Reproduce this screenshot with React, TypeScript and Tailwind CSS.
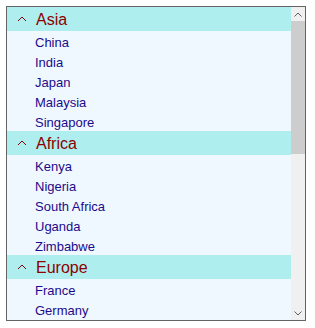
import React from "react";

const groups: { name: string; items: string[] }[] = [
  { name: "Asia", items: ["China", "India", "Japan", "Malaysia", "Singapore"] },
  { name: "Africa", items: ["Kenya", "Nigeria", "South Africa", "Uganda", "Zimbabwe"] },
  { name: "Europe", items: ["France", "Germany"] },
];

function Chevron() {
  return (
    <svg width="10" height="6" viewBox="0 0 10 6" className="shrink-0">
      <polyline points="1,5 5,1 9,5" fill="none" stroke="#8b0000" strokeWidth="1" />
    </svg>
  );
}

export default function App() {
  return (
    <div className="p-[6px]" style={{ fontFamily: '"Liberation Sans", Arial, sans-serif' }}>
      <div className="w-[300px] h-[315px] border border-[#646464] flex overflow-hidden">
        <div className="flex-1 overflow-hidden bg-[#f0f8ff]">
          {groups.map((g) => (
            <div key={g.name}>
              <div className="h-[24px] bg-[#afeeee] flex items-center pl-[10px] gap-[9px]">
                <Chevron />
                <span className="text-[16px] leading-none pt-[2px] text-[#8b0000]">{g.name}</span>
              </div>
              {g.items.map((it) => (
                <div key={it} className="h-[20px] flex items-center pl-[28px] pt-[2px] text-[13px] leading-none text-[#1c0a8c]">
                  {it}
                </div>
              ))}
            </div>
          ))}
        </div>
        <div className="w-[14px] bg-[#f0f0f0] flex flex-col">
          <div className="h-[14px] flex items-center justify-center">
            <svg width="8" height="5" viewBox="0 0 8 5">
              <polyline points="0.5,4.5 4,1 7.5,4.5" fill="none" stroke="#606060" strokeWidth="1" />
            </svg>
          </div>
          <div className="h-[133px] bg-[#cdcdcd]" />
          <div className="flex-1" />
          <div className="h-[14px] flex items-center justify-center">
            <svg width="8" height="5" viewBox="0 0 8 5">
              <polyline points="0.5,0.5 4,4 7.5,0.5" fill="none" stroke="#606060" strokeWidth="1" />
            </svg>
          </div>
        </div>
      </div>
    </div>
  );
}
